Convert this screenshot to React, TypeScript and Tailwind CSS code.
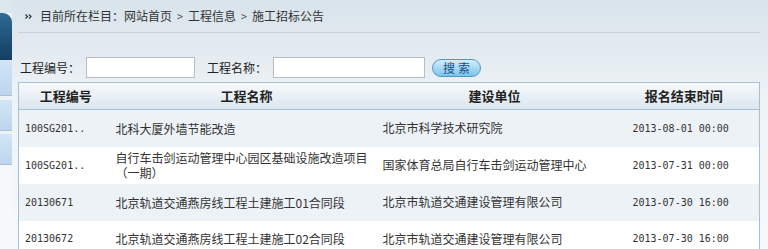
const rows = [
  { code: '100SG201..', name: '北科大厦外墙节能改造', unit: '北京市科学技术研究院', time: '2013-08-01 00:00' },
  { code: '100SG201..', name: '自行车击剑运动管理中心园区基础设施改造项目（一期）', unit: '国家体育总局自行车击剑运动管理中心', time: '2013-07-31 00:00' },
  { code: '20130671', name: '北京轨道交通燕房线工程土建施工01合同段', unit: '北京市轨道交通建设管理有限公司', time: '2013-07-30 16:00' },
  { code: '20130672', name: '北京轨道交通燕房线工程土建施工02合同段', unit: '北京市轨道交通建设管理有限公司', time: '2013-07-30 16:00' },
]

const cjk = "font-['Noto_Sans_CJK_SC',sans-serif]"
const mono = "font-['DejaVu_Sans_Mono',monospace]"

export default function App() {
  return (
    <div className={`flex h-[249px] w-[768px] overflow-hidden bg-white ${cjk}`}>
      {/* ── Sidebar edge ── */}
      <aside className="flex w-[12px] shrink-0 flex-col bg-[#f4f7fa]">
        <div className="h-[13px] bg-[#dce6ed]" />
        <div className="h-[47px] rounded-tr-[9px] bg-gradient-to-b from-[#2f6a95] to-[#143f62]" />
        <div className="h-[36px] border-b border-[#aebfcf] bg-gradient-to-b from-[#d3e5f6] to-[#bcd5ee]" />
        <div className="h-[4px] bg-[#eef3f7]" />
        <div className="h-[31px] border-b border-[#aebfcf] bg-gradient-to-b from-[#d3e5f6] to-[#bcd5ee]" />
        <div className="h-[3px] bg-[#eef3f7]" />
        <div className="h-[31px] border-b border-[#aebfcf] bg-gradient-to-b from-[#d3e5f6] to-[#bcd5ee]" />
        <div className="flex-1 bg-[#f6f9fb]" />
      </aside>

      {/* ── Main ── */}
      <main className="flex flex-1 flex-col bg-gradient-to-b from-[#d8e3eb] via-[#eef3f6] via-40% to-[#f7f9fb] pl-[6px] pr-[9px]">
        {/* Breadcrumb */}
        <div className="flex h-[33px] shrink-0 items-center border-b border-[#c9d3da] pl-[7px] text-[12px] text-[#333]">
          <svg width="7" height="5" viewBox="0 0 7 5" className="mr-[8px]">
            <path d="M0.5 0.5 L2.5 2.5 L0.5 4.5 M4 0.5 L6 2.5 L4 4.5" stroke="#333" strokeWidth="1.2" fill="none" />
          </svg>
          <span>目前所在栏目：网站首页</span>
          <span className={`mx-[5px] text-[10px] text-[#555] ${mono}`}>&gt;</span>
          <span>工程信息</span>
          <span className={`mx-[5px] text-[10px] text-[#555] ${mono}`}>&gt;</span>
          <span>施工招标公告</span>
        </div>

        {/* Search */}
        <div className="mt-[24px] flex h-[21px] items-center text-[12px] text-[#222]">
          <span className="ml-[2px] w-[66px]">工程编号：</span>
          <input className="h-[21px] w-[109px] border border-[#b7bcc6] bg-white" />
          <span className="ml-[12px] w-[66px]">工程名称：</span>
          <input className="h-[21px] w-[152px] border border-[#b7bcc6] bg-white" />
          <button className="ml-[7px] h-[18px] w-[49px] rounded-full border border-[#4f9ac8] bg-gradient-to-b from-[#d3eefb] to-[#7cc4ea] pl-[3px] text-[12px] leading-[16px] tracking-[3px] text-[#1b4f8c]">
            搜索
          </button>
        </div>

        {/* Table */}
        <table className="mt-[4px] w-[741px] table-fixed border-collapse border border-[#a6bfd4]">
          <colgroup>
            <col className="w-[94px]" />
            <col className="w-[268px]" />
            <col className="w-[228px]" />
            <col className="w-[151px]" />
          </colgroup>
          <thead>
            <tr className="h-[27px] border-b border-[#a6bfd4] bg-gradient-to-b from-[#f8fafc] to-[#dbe6ef] text-[13px] font-bold text-[#222]">
              <th className="text-center">工程编号</th>
              <th className="text-center">工程名称</th>
              <th className="text-center">建设单位</th>
              <th className="text-center">报名结束时间</th>
            </tr>
          </thead>
          <tbody className="text-[12px] text-[#333]">
            {rows.map((r, i) => (
              <tr key={i} className={`h-[37px] ${i % 2 === 0 ? 'bg-[#edf2f7]' : 'bg-white'}`}>
                <td className={`pl-[6px] text-[10px] ${mono}`}>{r.code}</td>
                <td className="pl-[3px] pr-[8px] leading-[15px]">{r.name}</td>
                <td className="pl-[2px]">{r.unit}</td>
                <td className={`pl-[24px] text-left text-[10px] ${mono}`}>{r.time}</td>
              </tr>
            ))}
          </tbody>
        </table>
      </main>
    </div>
  )
}
